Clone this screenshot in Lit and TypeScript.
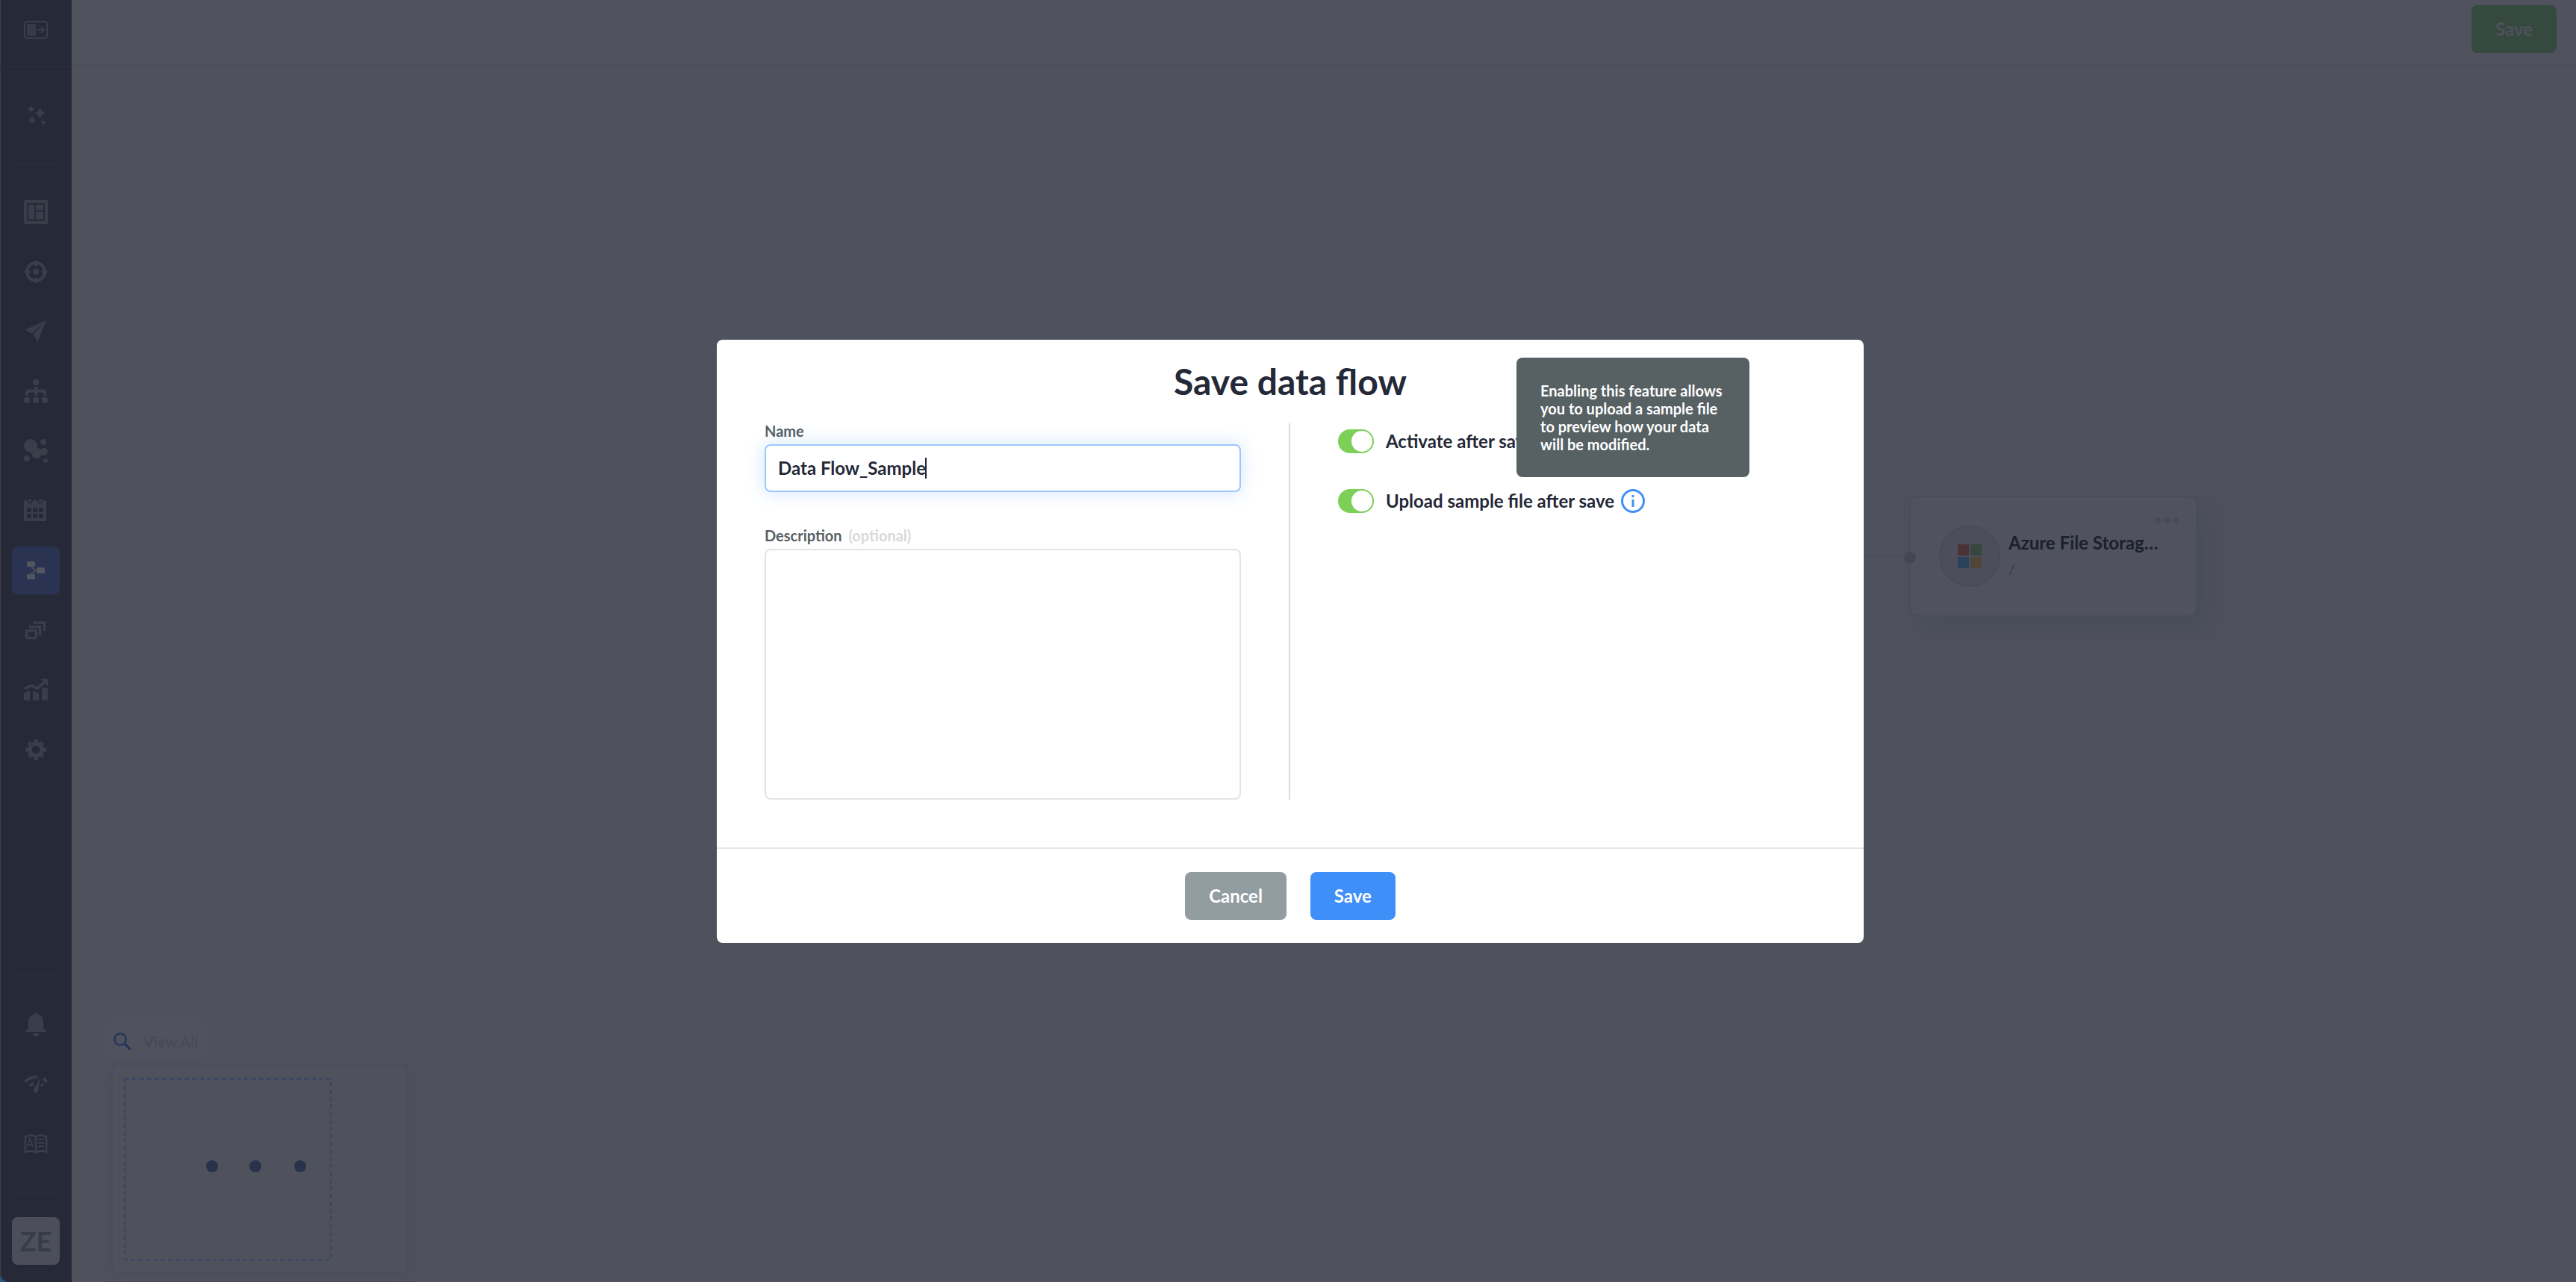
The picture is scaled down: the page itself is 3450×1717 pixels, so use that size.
import { LitElement, html, css, svg } from "lit";
import { customElement, state } from "lit/decorators.js";

const ICONS: Record<string, unknown> = {
  expand: svg`<rect x="1" y="5" width="30" height="22" rx="3" fill="none" stroke="currentColor" stroke-width="2"/><rect x="4" y="8" width="12" height="16" rx="2" fill="#353c48"/><path d="M18.500 16h8.500M23 12l4 4-4 4" fill="none" stroke="currentColor" stroke-width="1.800"/>`,
  sparkle: svg`<path d="M9.500 2.500q.9 4.600 5.500 5.500q-4.600.9-5.500 5.500q-.9-4.600-5.500-5.500q4.600-.9 5.500-5.500zM21.500 5.500q1.300 6.700 8 8q-6.700 1.300-8 8.500q-1.300-7.200-8-8.500q6.700-1.300 8-8zM11 17q1 5 6 6q-5 1-6 6.500q-1-5.500-6-6.500q5-1 6-6zM26.300 22q.7 3.300 4 4q-3.300.7-4 4q-.7-3.300-4-4q3.300-.7 4-4z" fill="currentColor"/>`,
  board: svg`<path fill-rule="evenodd" fill="currentColor" d="M2 0h28a2 2 0 0 1 2 2v28a2 2 0 0 1-2 2H2a2 2 0 0 1-2-2V2a2 2 0 0 1 2-2zM4 4v24h24V4z"/><path fill="currentColor" d="M6 6h8v20H6zM16 6h10v8H16zM16 16h10v10H16z"/>`,
  target: svg`<circle cx="16" cy="16" r="12" fill="none" stroke="currentColor" stroke-width="4"/><circle cx="16" cy="16" r="4" fill="currentColor"/><path fill="currentColor" d="M16 0l2.500 3v4L16 9l-2.500-2V3zM16 32l2.500-3v-4L16 23l-2.500 2v4zM0 16l3-2.500h4L9 16l-2 2.500H3zM32 16l-3-2.500h-4L23 16l2 2.500h4z"/>`,
  plane: svg`<path fill="currentColor" d="M30 1L2 13.500l6.500 4.200q1.500.8 3-.2L27 4.500 13.500 18.500q-1 1.200-.2 2.500L18.500 30z"/>`,
  tree: svg`<rect x="12" y="0" width="8" height="8" rx="2.500" fill="currentColor"/><path d="M4 22v-4.500a2 2 0 0 1 2-2h20a2 2 0 0 1 2 2V22M16 10v12" fill="none" stroke="currentColor" stroke-width="4"/><rect x="0" y="24" width="8" height="8" rx="2.500" fill="currentColor"/><rect x="12" y="24" width="8" height="8" rx="2.500" fill="currentColor"/><rect x="24" y="24" width="8" height="8" rx="2.500" fill="currentColor"/>`,
  bubbles: svg`<g fill="currentColor"><circle cx="9" cy="9" r="9"/><circle cx="17" cy="19" r="7"/><circle cx="27" cy="17" r="5"/><path d="M17 10l2 3 5 1v7l-4 1-8-7z"/><circle cx="26" cy="4" r="4"/><circle cx="4" cy="26" r="4"/><circle cx="29" cy="29" r="3"/></g>`,
  calendar: svg`<path fill="currentColor" fill-rule="evenodd" d="M2 2h2a4 4.500 0 0 0 8 0h6a4 4.500 0 0 0 8 0h2a2 2 0 0 1 2 2v24a2 2 0 0 1-2 2H2a2 2 0 0 1-2-2V4a2 2 0 0 1 2-2zM4 12v6h6v-6zM12 12v6h6v-6zM20 12v6h6v-6zM4 20v6h6v-6zM12 20v6h6v-6zM20 20v6h6v-6z"/><rect x="6" y="0" width="4" height="5" rx="2" fill="currentColor"/><rect x="20" y="0" width="4" height="5" rx="2" fill="currentColor"/>`,
  flow: svg`<g fill="currentColor"><rect x="4" y="4" width="11" height="7" rx="1.500"/><rect x="4" y="21" width="11" height="7" rx="1.500"/><rect x="17" y="12" width="11" height="8" rx="1.500"/></g><path d="M9 10l6 6-6 6M14 16h4" fill="none" stroke="currentColor" stroke-width="1.500"/>`,
  layers: svg`<rect x="3.500" y="16.500" width="13" height="10" rx="1" fill="none" stroke="currentColor" stroke-width="3.500"/><path d="M7 11.500h14.500V23M12.500 6h15v11" fill="none" stroke="currentColor" stroke-width="3.500"/>`,
  chart: svg`<path d="M1 14l9-4 8 4 11-9.500" fill="none" stroke="currentColor" stroke-width="3.600"/><path fill="currentColor" d="M22 1h10v10zM0 20l8-3v13H1a1 1 0 0 1-1-1zM12 17l6 3 2-1v11h-8zM24 14l2-1 6 1v15a1 1 0 0 1-1 1h-7z"/>`,
  gear: svg`<circle cx="16" cy="16" r="8" fill="none" stroke="currentColor" stroke-width="5.500"/><path d="M16 2v5M16 25v5M2 16h5M25 16h5M6.500 6.500l3 3M22.500 22.500l3 3M25.500 6.500l-3 3M9.500 22.500l-3 3" stroke="currentColor" stroke-width="5.500"/>`,
  bell: svg`<path fill="currentColor" d="M16 0a2 2 0 0 1 2 2.200c5 1 8 5 8 10V22c1 .8 4 .8 4 2.500 0 1-.8 1.500-1.500 1.500h-25C2.800 26 2 25.500 2 24.500 2 22.800 5 22.800 6 22v-9.800c0-5 3-9 8-10A2 2 0 0 1 16 0zM12 28h8a4 4 0 0 1-8 0z"/>`,
  gauge: svg`<path d="M1.500 13Q8 6 18 6.200M26 8.500q2.500 1.500 4.500 4.500" fill="none" stroke="currentColor" stroke-width="4"/><path d="M7.500 18.500q2.500-2.500 6-3.500M23 16l2.500 2" fill="none" stroke="currentColor" stroke-width="4"/><path fill="currentColor" d="M22.500 5L19 25a3 3 0 0 1-6-1z"/>`,
  book: svg`<path d="M16 6.500q-6-4-14 0-.5 10 0 20.500 8-3 14 0.500 6-3.500 14-.5.500-10.500 0-20.500-8-4-14 0zM16 6v21" fill="none" stroke="currentColor" stroke-width="2.600"/><path d="M4.500 20l3.500-11 4 11M6 17h5M19 11q4-2 8.500 0M19 15.500q4-2 8.500 0M19 20q4-2 8.500 0" fill="none" stroke="currentColor" stroke-width="1.800"/>`,
};

const icon = (name: string) => html`<svg class="icon" viewBox="0 0 32 32" aria-hidden="true">${ICONS[name]}</svg>`;

const NAV = [
  ["board", "Dashboard"],
  ["target", "Targets"],
  ["plane", "Campaigns"],
  ["tree", "Hierarchy"],
  ["bubbles", "Segments"],
  ["calendar", "Calendar"],
  ["flow", "Data flows"],
  ["layers", "Collections"],
  ["chart", "Reports"],
  ["gear", "Settings"],
];

const TOOLS = [
  ["bell", "Notifications"],
  ["gauge", "Status"],
  ["book", "Documentation"],
];

@customElement("app-sidebar")
export class AppSidebar extends LitElement {
  static styles = css`
    :host {
      display: flex;
      flex-direction: column;
      align-items: center;
      box-sizing: border-box;
      background: #262938;
      box-shadow: inset 1px 0 #3b3e4a;
      border-bottom-left-radius: 12px;
      color: #3a3e4b;
      font-family: Lato, sans-serif;
    }
    .toggle {
      display: grid;
      place-items: center;
      box-sizing: border-box;
      align-self: stretch;
      height: 90px;
      padding: 0 0 8px;
      border: 0;
      border-bottom: 2px solid #2a2d3c;
      background: none;
      color: inherit;
    }
    .item {
      display: grid;
      place-items: center;
      width: 64px;
      height: 64px;
      border-radius: 8px;
      color: #3a3e4b;
    }
    .assistant {
      margin-top: 32px;
    }
    .active {
      background: #2a3452;
      color: #535561;
    }
    .icon {
      display: block;
      width: 32px;
      height: 32px;
    }
    .rule {
      width: 64px;
      height: 2px;
      margin: 0;
      border: 0;
      background: #2a2d3b;
    }
    .rule.first {
      margin-top: 32px;
    }
    .nav {
      display: flex;
      flex-direction: column;
      gap: 16px;
      margin-top: 32px;
    }
    .tools {
      display: flex;
      flex-direction: column;
      gap: 16px;
      margin: 32px 0;
    }
    .spacer {
      flex: 1;
    }
    .avatar {
      width: 64px;
      height: 64px;
      margin: 32px 0 23px;
      padding: 0;
      border: 0;
      border-radius: 8px;
      background: #4c4e5a;
      color: #363d48;
      font: 700 36px/64px Lato, sans-serif;
    }
  `;

  render() {
    return html`
      <button class="toggle" aria-label="Expand menu">${icon("expand")}</button>
      <a class="item assistant" href="#" aria-label="Assistant">${icon("sparkle")}</a>
      <hr class="rule first" />
      <nav class="nav">
        ${NAV.map(
          ([name, label]) => html`<a class="item ${name === "flow" ? "active" : ""}" href="#" aria-label=${label}>${icon(name)}</a>`
        )}
      </nav>
      <div class="spacer"></div>
      <hr class="rule" />
      <div class="tools">
        ${TOOLS.map(([name, label]) => html`<a class="item" href="#" aria-label=${label}>${icon(name)}</a>`)}
      </div>
      <hr class="rule" />
      <button class="avatar">ZE</button>
    `;
  }
}

@customElement("flow-canvas")
export class FlowCanvas extends LitElement {
  static styles = css`
    :host {
      display: flex;
      flex-direction: column;
      min-width: 0;
      font-family: Lato, sans-serif;
      background: #4f515d;
    }
    .bar {
      display: flex;
      justify-content: flex-end;
      box-sizing: border-box;
      height: 88px;
      padding: 7px 26px 0;
      border-bottom: 2px solid #4c4e5a;
      background: #50525e;
    }
    .save {
      height: 64px;
      padding: 0 32px;
      border: 0;
      border-radius: 8px;
      background: #36493f;
      color: #4f515d;
      font: 700 24px/64px Lato, sans-serif;
    }
    .board {
      position: relative;
      flex: 1;
      overflow: hidden;
    }
    .wire {
      position: absolute;
      left: 2300px;
      top: 656px;
      width: 160px;
      height: 2px;
      background: #4b4d59;
    }
    .node {
      position: absolute;
      left: 2461px;
      top: 576px;
      display: flex;
      align-items: center;
      gap: 11px;
      box-sizing: border-box;
      width: 386px;
      height: 162px;
      padding: 0 38px;
      border: 2px solid #4b4d59;
      border-radius: 10px;
      background: #50525e;
      box-shadow: 16px 16px 24px rgba(66, 76, 86, 0.5);
    }
    .port {
      position: absolute;
      left: -9px;
      top: 73px;
      width: 16px;
      height: 16px;
      border-radius: 50%;
      background: #454853;
    }
    .logo {
      display: grid;
      flex: none;
      place-items: center;
      box-sizing: border-box;
      width: 82px;
      height: 82px;
      border: 2px solid #494b57;
      border-radius: 50%;
      background: #4c4e5a;
    }
    .logo svg {
      width: 32px;
      height: 32px;
    }
    .name {
      margin: 0;
      color: #1c1f2d;
      font: 700 24px/32px Lato, sans-serif;
      white-space: nowrap;
    }
    .path {
      margin: 0;
      color: #363a47;
      font: 400 20px/36px Lato, sans-serif;
    }
    .more {
      position: absolute;
      right: 20px;
      top: 24px;
      display: flex;
      gap: 4px;
      padding: 3px;
      border: 0;
      background: none;
    }
    .more span {
      width: 8px;
      height: 8px;
      border-radius: 50%;
      background: #484a56;
    }
    .finder {
      position: absolute;
      left: 48px;
      bottom: 294px;
      display: flex;
      align-items: center;
      gap: 16px;
      box-sizing: border-box;
      height: 56px;
      padding: 0 8px;
      border: 0;
      border-radius: 4px;
      background: #50525e;
      color: #484a56;
      font: 700 20px/24px Lato, sans-serif;
    }
    .finder svg {
      width: 24px;
      height: 24px;
    }
    .map {
      position: absolute;
      left: 53px;
      bottom: 11px;
      box-sizing: border-box;
      width: 398px;
      height: 280px;
      padding: 16px 15px;
      border: 2px solid #4b4d59;
      border-radius: 8px;
      background: #4f515d;
      box-shadow: 0 8px 16px rgba(70, 78, 90, 0.25);
    }
    .map svg {
      display: block;
      width: 278px;
      height: 244px;
    }
  `;

  render() {
    return html`
      <header class="bar"><button class="save">Save</button></header>
      <div class="board">
        <div class="wire"></div>
        <article class="node">
          <span class="port"></span>
          <div class="logo">
            <svg viewBox="0 0 32 32" aria-hidden="true">
              <path fill="#4b3236" d="M0 0h15v15H0z" />
              <path fill="#38473b" d="M17 0h15v15H17z" />
              <path fill="#2c425b" d="M0 17h15v15H0z" />
              <path fill="#4f4638" d="M17 17h15v15H17z" />
            </svg>
          </div>
          <div>
            <h2 class="name">Azure File Storag…</h2>
            <p class="path">/</p>
          </div>
          <button class="more" aria-label="More"><span></span><span></span><span></span></button>
        </article>
        <button class="finder">
          <svg viewBox="0 0 24 24" aria-hidden="true">
            <circle cx="9" cy="9" r="7.700" fill="none" stroke="#28355b" stroke-width="2.600" />
            <path d="M14.500 14.500l8 8" stroke="#28355b" stroke-width="3.400" />
          </svg>
          View All
        </button>
        <div class="map">
          <svg viewBox="0 0 278 244" aria-hidden="true">
            <rect x="1" y="1" width="276" height="242" fill="none" stroke="#3a4565" stroke-width="2" stroke-dasharray="6 4" />
            <g fill="#28334b">
              <circle cx="118" cy="118" r="8" />
              <circle cx="176" cy="118" r="8" />
              <circle cx="236" cy="118" r="8" />
            </g>
          </svg>
        </div>
      </div>
    `;
  }
}

@customElement("save-dialog")
export class SaveDialog extends LitElement {
  @state() private name = "Data Flow_Sample";

  static styles = css`
    :host {
      display: block;
      width: 1536px;
      max-width: 100%;
      font-family: Lato, sans-serif;
      color: #242837;
    }
    .dialog {
      border-radius: 8px;
      background: #fff;
    }
    .title {
      margin: 0;
      padding: 24px 0;
      font: 700 48px/64px Lato, sans-serif;
      text-align: center;
    }
    .body {
      display: grid;
      grid-template-columns: 1fr 2px 1fr;
      gap: 64px;
      padding: 0 66px 64px 64px;
    }
    .fields {
      display: flex;
      flex-direction: column;
    }
    .label {
      padding-bottom: 8px;
      color: #576164;
      font: 700 20px/20px Lato, sans-serif;
    }
    .optional {
      margin-left: 4px;
      color: #d9d9d9;
    }
    .box {
      box-sizing: border-box;
      width: 100%;
      border: 2px solid #e3e3e3;
      border-radius: 8px;
      background: #fff;
      color: #242837;
      font: 700 24px/28px Lato, sans-serif;
      outline: none;
    }
    .control {
      position: relative;
      margin-bottom: 48px;
    }
    .entry {
      display: block;
      height: 64px;
      padding: 0 16px;
      caret-color: transparent;
    }
    .entry:focus {
      border-color: #9cc7ff;
      box-shadow: 0 0 24px rgba(62, 142, 247, 0.24);
    }
    .caret {
      position: absolute;
      left: 215px;
      top: 18px;
      width: 2px;
      height: 28px;
      background: #242837;
      pointer-events: none;
    }
    .area {
      display: block;
      height: 336px;
      padding: 16px;
      resize: none;
    }
    .split {
      background: #d9d9d9;
    }
    .options {
      display: flex;
      flex-direction: column;
      gap: 48px;
      padding-top: 8px;
    }
    .option {
      display: flex;
      align-items: center;
      height: 32px;
      font: 700 24px/32px Lato, sans-serif;
    }
    .switch {
      appearance: none;
      display: flex;
      justify-content: flex-start;
      box-sizing: border-box;
      width: 48px;
      height: 32px;
      margin: 0 16px 0 0;
      padding: 2px;
      border-radius: 16px;
      background: #929da1;
    }
    .switch::before {
      content: "";
      width: 28px;
      height: 28px;
      border-radius: 50%;
      background: #fff;
    }
    .switch:checked {
      justify-content: flex-end;
      background: #7ccf57;
    }
    .hint {
      position: relative;
      width: 32px;
      height: 32px;
      margin-left: 9px;
      padding: 0;
      border: 0;
      background: none;
    }
    .hint svg {
      display: block;
      width: 32px;
      height: 32px;
    }
    .tip {
      position: absolute;
      left: 50%;
      bottom: calc(100% + 16px);
      box-sizing: border-box;
      width: 312px;
      margin-left: -156px;
      padding: 32px;
      border-radius: 8px;
      background: #576164;
      color: #fff;
      font: 700 20px/24px Lato, sans-serif;
      text-align: left;
    }
    .actions {
      display: flex;
      justify-content: center;
      gap: 32px;
      padding: 31px 0;
      border-top: 2px solid #e6e6e6;
    }
    .action {
      height: 64px;
      padding: 0 32px;
      border: 0;
      border-radius: 8px;
      color: #fff;
      font: 700 24px/64px Lato, sans-serif;
    }
    .cancel {
      background: #929da1;
    }
    .save {
      background: #3f8ff8;
    }
  `;

  firstUpdated() {
    const field = this.renderRoot.querySelector<HTMLInputElement>("#name")!;
    field.focus();
    field.setSelectionRange(this.name.length, this.name.length);
  }

  render() {
    return html`
      <section class="dialog" role="dialog" aria-labelledby="title">
        <h1 class="title" id="title">Save data flow</h1>
        <div class="body">
          <div class="fields">
            <label class="label" for="name">Name</label>
            <div class="control">
              <input
                class="box entry"
                id="name"
                .value=${this.name}
                @input=${(e: Event) => (this.name = (e.target as HTMLInputElement).value)}
              />
              <span class="caret"></span>
            </div>
            <label class="label" for="description">Description <span class="optional">(optional)</span></label>
            <textarea class="box area" id="description"></textarea>
          </div>
          <div class="split"></div>
          <div class="options">
            <div class="option">
              <input class="switch" id="activate" type="checkbox" role="switch" checked />
              <label for="activate">Activate after save</label>
            </div>
            <div class="option">
              <input class="switch" id="upload" type="checkbox" role="switch" checked />
              <label for="upload">Upload sample file after save</label>
              <button class="hint" aria-label="About sample files" aria-describedby="tip">
                <svg viewBox="0 0 32 32" aria-hidden="true">
                  <circle cx="16" cy="16" r="14.500" fill="none" stroke="#3f8ff8" stroke-width="3" />
                  <path d="M14.500 8h3v3h-3zM14.500 14h3v10h-3z" fill="#3f8ff8" />
                </svg>
                <span class="tip" id="tip" role="tooltip"
                  >Enabling this feature allows you to upload a sample file to preview how your data will be modified.</span
                >
              </button>
            </div>
          </div>
        </div>
        <footer class="actions">
          <button class="action cancel">Cancel</button>
          <button class="action save">Save</button>
        </footer>
      </section>
    `;
  }
}

@customElement("app-root")
export class AppRoot extends LitElement {
  static styles = css`
    :host {
      display: block;
    }
    .page {
      display: grid;
      grid-template-columns: 96px 1fr;
      min-height: 100vh;
      background: #2c5580;
    }
    .overlay {
      position: fixed;
      inset: 0;
      display: flex;
      align-items: center;
      justify-content: center;
      padding-left: 6px;
    }
  `;

  render() {
    return html`
      <div class="page">
        <app-sidebar></app-sidebar>
        <flow-canvas></flow-canvas>
      </div>
      <div class="overlay"><save-dialog></save-dialog></div>
    `;
  }
}
